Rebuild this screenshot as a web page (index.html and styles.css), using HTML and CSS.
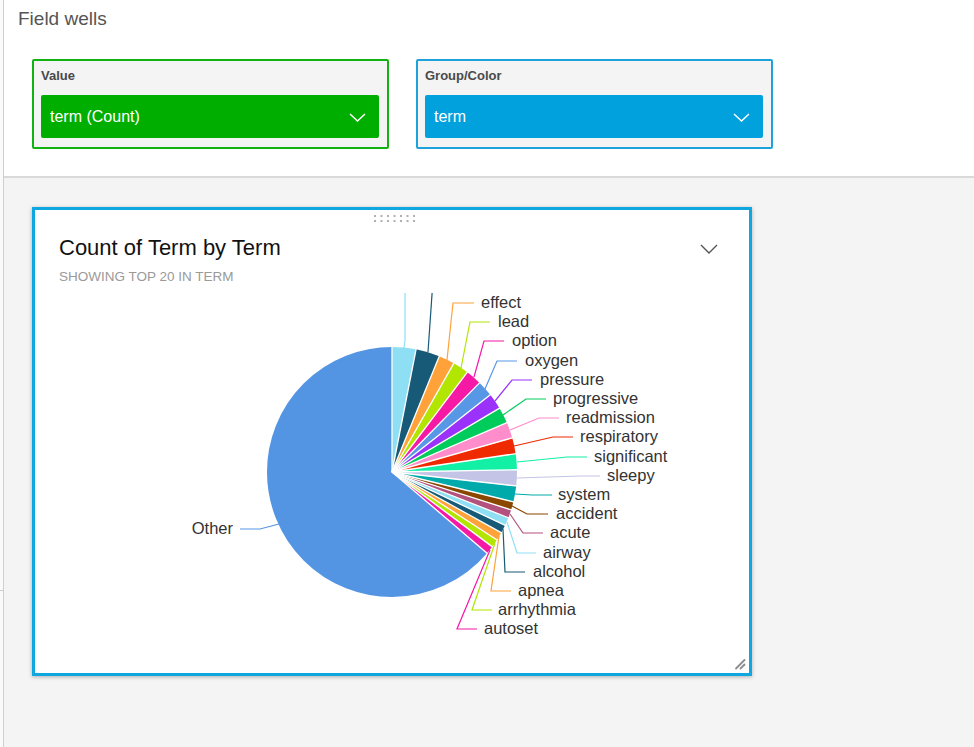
FILE: index.html
```html
<!DOCTYPE html>
<html>
<head>
<meta charset="utf-8">
<title>Field wells</title>
<link rel="stylesheet" href="styles.css">
</head>
<body>
<div class="page">
  <div class="side"><div class="side-top"></div></div>
  <div class="main">
    <section class="wells-panel">
      <h2 class="panel-title">Field wells</h2>
      <div class="wells">
        <div class="well well-green">
          <div class="well-label">Value</div>
          <div class="dropdown dd-green">
            <span>term (Count)</span>
            <svg class="dd-chev" width="17" height="9" viewBox="0 0 17 9"><polyline points="1,1 8.5,8 16,1" fill="none" stroke="#fff" stroke-width="1.5"/></svg>
          </div>
        </div>
        <div class="well well-blue">
          <div class="well-label">Group/Color</div>
          <div class="dropdown dd-blue">
            <span>term</span>
            <svg class="dd-chev" width="17" height="9" viewBox="0 0 17 9"><polyline points="1,1 8.5,8 16,1" fill="none" stroke="#fff" stroke-width="1.5"/></svg>
          </div>
        </div>
      </div>
    </section>
    <section class="canvas">
      <div class="card">
        <svg class="drag" width="42" height="8" viewBox="0 0 42 8">
          <g fill="#b0b0b0">
            <rect x="0" y="0" width="2" height="2"/><rect x="6.5" y="0" width="2" height="2"/><rect x="13" y="0" width="2" height="2"/><rect x="19.5" y="0" width="2" height="2"/><rect x="26" y="0" width="2" height="2"/><rect x="32.5" y="0" width="2" height="2"/><rect x="39" y="0" width="2" height="2"/>
            <rect x="0" y="5" width="2" height="2"/><rect x="6.5" y="5" width="2" height="2"/><rect x="13" y="5" width="2" height="2"/><rect x="19.5" y="5" width="2" height="2"/><rect x="26" y="5" width="2" height="2"/><rect x="32.5" y="5" width="2" height="2"/><rect x="39" y="5" width="2" height="2"/>
          </g>
        </svg>
        <div class="card-head">
          <div>
            <h3 class="card-title">Count of Term by Term</h3>
            <div class="card-sub">SHOWING TOP 20 IN TERM</div>
          </div>
          <svg class="card-chev" width="18" height="10" viewBox="0 0 18 10"><polyline points="1,1 9,9 17,1" fill="none" stroke="#555" stroke-width="1.4"/></svg>
        </div>
        <svg class="chart" width="714" height="380" viewBox="35 293 714 380">
          <g transform="rotate(-90 392 472)" fill="none" stroke-width="125">
            <circle cx="392" cy="472" r="62.5" stroke="#8edff4" stroke-dasharray="12.108 392.699" stroke-dashoffset="0"/>
            <circle cx="392" cy="472" r="62.5" stroke="#175a77" stroke-dasharray="12.108 392.699" stroke-dashoffset="-12.108"/>
            <circle cx="392" cy="472" r="62.5" stroke="#ffa23a" stroke-dasharray="8.094 392.699" stroke-dashoffset="-24.216"/>
            <circle cx="392" cy="472" r="62.5" stroke="#b2e500" stroke-dasharray="8.094 392.699" stroke-dashoffset="-32.310"/>
            <circle cx="392" cy="472" r="62.5" stroke="#f519a6" stroke-dasharray="8.094 392.699" stroke-dashoffset="-40.404"/>
            <circle cx="392" cy="472" r="62.5" stroke="#5897e6" stroke-dasharray="8.094 392.699" stroke-dashoffset="-48.498"/>
            <circle cx="392" cy="472" r="62.5" stroke="#9b32fb" stroke-dasharray="8.094 392.699" stroke-dashoffset="-56.592"/>
            <circle cx="392" cy="472" r="62.5" stroke="#00cc5c" stroke-dasharray="8.094 392.699" stroke-dashoffset="-64.686"/>
            <circle cx="392" cy="472" r="62.5" stroke="#ff8ccb" stroke-dasharray="8.094 392.699" stroke-dashoffset="-72.780"/>
            <circle cx="392" cy="472" r="62.5" stroke="#f02a00" stroke-dasharray="8.094 392.699" stroke-dashoffset="-80.874"/>
            <circle cx="392" cy="472" r="62.5" stroke="#12f0a6" stroke-dasharray="8.094 392.699" stroke-dashoffset="-88.968"/>
            <circle cx="392" cy="472" r="62.5" stroke="#c4c4e6" stroke-dasharray="8.094 392.699" stroke-dashoffset="-97.062"/>
            <circle cx="392" cy="472" r="62.5" stroke="#00aaaa" stroke-dasharray="8.094 392.699" stroke-dashoffset="-105.156"/>
            <circle cx="392" cy="472" r="62.5" stroke="#8a4700" stroke-dasharray="4.156 392.699" stroke-dashoffset="-113.250"/>
            <circle cx="392" cy="472" r="62.5" stroke="#b3527f" stroke-dasharray="4.156 392.699" stroke-dashoffset="-117.406"/>
            <circle cx="392" cy="472" r="62.5" stroke="#8edff4" stroke-dasharray="4.156 392.699" stroke-dashoffset="-121.562"/>
            <circle cx="392" cy="472" r="62.5" stroke="#175a77" stroke-dasharray="4.156 392.699" stroke-dashoffset="-125.718"/>
            <circle cx="392" cy="472" r="62.5" stroke="#ffa23a" stroke-dasharray="4.156 392.699" stroke-dashoffset="-129.874"/>
            <circle cx="392" cy="472" r="62.5" stroke="#b2e500" stroke-dasharray="4.156 392.699" stroke-dashoffset="-134.030"/>
            <circle cx="392" cy="472" r="62.5" stroke="#f519a6" stroke-dasharray="4.156 392.699" stroke-dashoffset="-138.186"/>
            <circle cx="392" cy="472" r="62.5" stroke="#5495e3" stroke-dasharray="250.357 392.699" stroke-dashoffset="-142.342"/>
          </g>
          <g stroke="#fff" stroke-width="1.3">
            <line x1="392" y1="472" x2="392" y2="345"/>
            <line x1="392" y1="472" x2="392" y2="345" transform="rotate(11.1 392 472)"/>
            <line x1="392" y1="472" x2="392" y2="345" transform="rotate(22.2 392 472)"/>
            <line x1="392" y1="472" x2="392" y2="345" transform="rotate(29.62 392 472)"/>
            <line x1="392" y1="472" x2="392" y2="345" transform="rotate(37.04 392 472)"/>
            <line x1="392" y1="472" x2="392" y2="345" transform="rotate(44.46 392 472)"/>
            <line x1="392" y1="472" x2="392" y2="345" transform="rotate(51.88 392 472)"/>
            <line x1="392" y1="472" x2="392" y2="345" transform="rotate(59.30 392 472)"/>
            <line x1="392" y1="472" x2="392" y2="345" transform="rotate(66.72 392 472)"/>
            <line x1="392" y1="472" x2="392" y2="345" transform="rotate(74.14 392 472)"/>
            <line x1="392" y1="472" x2="392" y2="345" transform="rotate(81.56 392 472)"/>
            <line x1="392" y1="472" x2="392" y2="345" transform="rotate(88.98 392 472)"/>
            <line x1="392" y1="472" x2="392" y2="345" transform="rotate(96.40 392 472)"/>
            <line x1="392" y1="472" x2="392" y2="345" transform="rotate(103.82 392 472)"/>
            <line x1="392" y1="472" x2="392" y2="345" transform="rotate(107.63 392 472)"/>
            <line x1="392" y1="472" x2="392" y2="345" transform="rotate(111.44 392 472)"/>
            <line x1="392" y1="472" x2="392" y2="345" transform="rotate(115.25 392 472)"/>
            <line x1="392" y1="472" x2="392" y2="345" transform="rotate(119.06 392 472)"/>
            <line x1="392" y1="472" x2="392" y2="345" transform="rotate(122.87 392 472)"/>
            <line x1="392" y1="472" x2="392" y2="345" transform="rotate(126.68 392 472)"/>
            <line x1="392" y1="472" x2="392" y2="345" transform="rotate(130.49 392 472)"/>
          </g>
          <g fill="none" stroke-width="1.2">
            <polyline stroke="#8edff4" points="404,348 405,340 405,280"/>
            <polyline stroke="#175a77" points="428,352 433,280"/>
            <polyline stroke="#ffa23a" points="447,360 453,303 474,303"/>
            <polyline stroke="#b2e500" points="461,368 470,322 490,322"/>
            <polyline stroke="#f519a6" points="474,377 484,341 504,341"/>
            <polyline stroke="#5897e6" points="485,389 497,361 517,361"/>
            <polyline stroke="#9b32fb" points="495,401 512,380 532,380"/>
            <polyline stroke="#00cc5c" points="503,415 526,399 546,399"/>
            <polyline stroke="#ff8ccb" points="510,430 539,418 559,418"/>
            <polyline stroke="#f02a00" points="514,446 553,437 573,437"/>
            <polyline stroke="#12f0a6" points="517,462 567,457 587,457"/>
            <polyline stroke="#c4c4e6" points="517,478 580,476 600,476"/>
            <polyline stroke="#00aaaa" points="515,494 532,495 552,495"/>
            <polyline stroke="#8a4700" points="512,506 527,514 548,514"/>
            <polyline stroke="#b3527f" points="510,514 523,533 543,533"/>
            <polyline stroke="#8edff4" points="507,522 517,553 536,553"/>
            <polyline stroke="#175a77" points="503,529 505,572 525,572"/>
            <polyline stroke="#ffa23a" points="499,536 491,591 511,591"/>
            <polyline stroke="#b2e500" points="495,543 472,610 492,610"/>
            <polyline stroke="#f519a6" points="490,550 457,629 477,629"/>
            <polyline stroke="#5495e3" points="279,524 260,529 240,529"/>
          </g>
          <g class="labels">
            <text x="481" y="308">effect</text>
            <text x="498" y="327">lead</text>
            <text x="512" y="346">option</text>
            <text x="525" y="366">oxygen</text>
            <text x="540" y="385">pressure</text>
            <text x="553" y="404">progressive</text>
            <text x="566" y="423">readmission</text>
            <text x="580" y="442">respiratory</text>
            <text x="594" y="462">significant</text>
            <text x="607" y="481">sleepy</text>
            <text x="558" y="500">system</text>
            <text x="556" y="519">accident</text>
            <text x="550" y="538">acute</text>
            <text x="543" y="558">airway</text>
            <text x="533" y="577">alcohol</text>
            <text x="518" y="596">apnea</text>
            <text x="498" y="615">arrhythmia</text>
            <text x="484" y="634">autoset</text>
            <text x="233" y="534" text-anchor="end">Other</text>
          </g>
        </svg>
        <svg class="grip" width="12" height="12" viewBox="0 0 12 12">
          <g stroke="#8c8c8c" stroke-width="1.8" stroke-linecap="round"><line x1="10.5" y1="2" x2="2" y2="10.5"/><line x1="10.5" y1="6.5" x2="6.5" y2="10.5"/></g>
        </svg>
      </div>
    </section>
  </div>
</div>
</body>
</html>
```
FILE: styles.css
```css
html, body {
  margin: 0;
  padding: 0;
}
body {
  width: 974px;
  height: 747px;
  overflow: hidden;
  background: #f4f4f4;
  font-family: "Liberation Sans", Arial, sans-serif;
}
.page {
  display: flex;
  height: 747px;
}
.side {
  width: 3px;
  background: #fafafa;
}
.side-top {
  height: 590px;
  border-bottom: 1px solid #cccccc;
}
.main {
  flex: 1;
  display: flex;
  flex-direction: column;
  border-left: 1px solid #cfcfcf;
}
.wells-panel {
  background: #ffffff;
  height: 168px;
  padding: 8px 0 0 14px;
  border-bottom: 2px solid #d9d9d9;
}
.panel-title {
  margin: 0;
  font-size: 19px;
  font-weight: normal;
  line-height: 22px;
  color: #555555;
}
.wells {
  display: flex;
  gap: 27px;
  margin-top: 29px;
  padding-left: 14px;
}
.well {
  box-sizing: border-box;
  width: 357px;
  height: 90px;
  padding: 8px 8px 9px 7px;
  border: 2px solid;
  border-radius: 2px;
  background: #f4f4f4;
}
.well-green { border-color: #12b212; }
.well-blue { border-color: #1ea2dc; }
.well-label {
  font-size: 13px;
  font-weight: bold;
  line-height: 14px;
  color: #4a4a4a;
  margin-bottom: 12px;
}
.dropdown {
  height: 43px;
  border-radius: 2px;
  display: flex;
  align-items: center;
  justify-content: space-between;
  padding: 0 13px 0 9px;
  color: #ffffff;
  font-size: 16px;
}
.dd-green { background: #00ae00; }
.dd-blue { background: #00a1dd; }
.dd-chev { display: block; margin-top: 2px; }
.canvas {
  flex: 1;
  padding: 29px 0 0 28px;
}
.card {
  position: relative;
  box-sizing: border-box;
  width: 720px;
  height: 469px;
  border: 3px solid #0ea7e0;
  background: #ffffff;
  box-shadow: 0 1px 4px rgba(0, 0, 0, 0.28);
  display: flex;
  flex-direction: column;
}
.drag {
  position: absolute;
  top: 5px;
  left: 339px;
}
.card-head {
  display: flex;
  justify-content: space-between;
  align-items: flex-start;
  padding: 25px 31px 8px 24px;
}
.card-title {
  margin: 0;
  font-size: 22px;
  font-weight: normal;
  line-height: 26px;
  color: #111111;
}
.card-sub {
  margin-top: 8px;
  font-size: 13.5px;
  line-height: 16px;
  color: #9a9a9a;
}
.card-chev {
  display: block;
  margin-top: 9px;
}
.chart {
  display: block;
}
.labels text {
  font-family: "Liberation Sans", Arial, sans-serif;
  font-size: 16.5px;
  fill: #333333;
}
.grip {
  position: absolute;
  right: 3px;
  bottom: 3px;
}
```
